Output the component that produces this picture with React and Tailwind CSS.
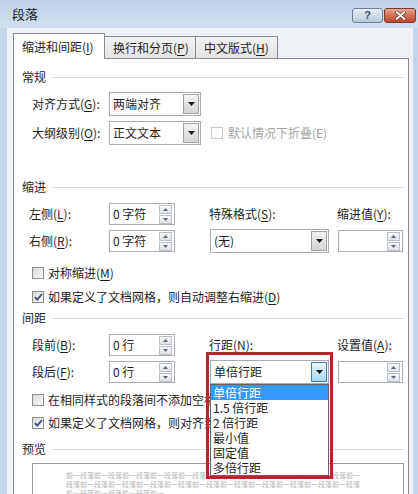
import React from "react";

function Acc({ t, k, colon = true }) {
  return (
    <span className="whitespace-nowrap">
      {t}(<span className="underline underline-offset-2">{k}</span>){colon ? ":" : ""}
    </span>
  );
}

function DownTri() {
  return (
    <svg width="7" height="4" viewBox="0 0 7 4">
      <path d="M0 0h7L3.5 4z" fill="#1a1a1a" />
    </svg>
  );
}

function Combo({ value, className, hot }) {
  return (
    <div className={`h-[24px] border border-[#a5acb5] bg-white flex items-stretch ${className}`}>
      <span className="flex-1 pl-[3px] flex items-center whitespace-nowrap">{value}</span>
      <div
        className={`w-[16px] m-px border flex items-center justify-center bg-gradient-to-b ${
          hot ? "border-[#3c7fb1] from-[#eaf6fd] to-[#a7d9f5]" : "border-[#a3a3a3] from-[#f3f3f3] to-[#d3d3d3]"
        }`}
      >
        <DownTri />
      </div>
    </div>
  );
}

function SpinBtn({ up }) {
  return (
    <div className="w-[13px] h-[9px] border border-[#b9c0ca] bg-gradient-to-b from-[#f8f8f8] to-[#e1e3e6] flex items-center justify-center">
      <svg width="5" height="3" viewBox="0 0 5 3">
        <path d={up ? "M0 3h5L2.5 0z" : "M0 0h5L2.5 3z"} fill="#56667f" />
      </svg>
    </div>
  );
}

function Spin({ value, className }) {
  return (
    <div className={`h-[22px] border border-[#abadb3] bg-white flex items-center ${className}`}>
      <span className="flex-1 pl-[3px] whitespace-nowrap">{value}</span>
      <div className="flex flex-col gap-px mr-[2px]">
        <SpinBtn up />
        <SpinBtn />
      </div>
    </div>
  );
}

function Check({ checked, disabled }) {
  return (
    <div
      className={`w-[12px] h-[12px] shrink-0 border flex items-center justify-center ${
        disabled ? "border-[#cacaca] bg-white" : "border-[#8e8f8f] bg-gradient-to-br from-[#d8d8d8] to-[#fafafa]"
      }`}
    >
      {checked && (
        <svg width="9" height="8" viewBox="0 0 9 8">
          <path d="M1 4.2l2.3 2.4L8 1" fill="none" stroke="#3a4b86" strokeWidth="1.8" />
        </svg>
      )}
    </div>
  );
}

function CheckRow({ checked, children, className }) {
  return (
    <div className={`h-[18px] ml-[10px] flex items-center gap-[4px] whitespace-nowrap ${className}`}>
      <Check checked={checked} />
      <span>{children}</span>
    </div>
  );
}

function Header({ title, className }) {
  return (
    <div className={`h-[18px] flex items-center ${className}`}>
      <span>{title}</span>
      <div className="flex-1 h-px bg-[#d5dfe5] ml-[5px]" />
    </div>
  );
}

const previewLines = [
  "前一段落前一段落前一段落前一段落前一段落前一段落前一段落前一段落前一段落前一段落前一",
  "段落前一段落前一段落前一段落前一段落前一段落前一段落前一段落前一段落前一段落前一段落",
  "前一段落前一段落前一段落前一",
];

export default function App() {
  return (
    <div className="w-[418px] h-[494px] overflow-hidden relative flex flex-col bg-[#c4d6ec] text-[12px] text-[#1e1e1e] font-['Microsoft_YaHei','Noto_Sans_CJK_SC',sans-serif]">
      {/* Title bar */}
      <div className="h-[28px] shrink-0 flex pl-[12px] pr-[2px] bg-gradient-to-b from-[#bcd1ea] to-[#d1e0f0]">
        <span className="self-center text-[13px] text-[#1b1b1b]">段落</span>
        <div className="ml-auto mt-[8px] flex gap-px">
          <div className="w-[31px] h-[15px] rounded-[3px] border border-[#71819b] bg-gradient-to-b from-[#e9eff6] to-[#b7c8dc] flex items-center justify-center">
            <span className="text-[11px] leading-none font-bold text-[#3e4d62] font-['Liberation_Sans',sans-serif]">?</span>
          </div>
          <div className="w-[32px] h-[15px] rounded-[3px] border border-[#7d3a2e] bg-gradient-to-b from-[#eaa796] via-[#d16f58] to-[#c0472f] flex items-center justify-center">
            <svg width="11" height="9" viewBox="0 0 11 9">
              <path d="M1.5 1l8 7M9.5 1l-8 7" stroke="#5a2418" strokeWidth="3" strokeLinecap="round" />
              <path d="M1.5 1l8 7M9.5 1l-8 7" stroke="#ffffff" strokeWidth="1.8" strokeLinecap="round" />
            </svg>
          </div>
        </div>
      </div>

      {/* Client area */}
      <div className="flex-1 ml-[7px] mr-[5px] bg-[#eef2f7] pl-[6px] pr-[4px] pt-[5px] flex flex-col">
        {/* Tabs */}
        <div className="h-[25px] shrink-0 flex items-end">
          <div className="relative z-10 w-[92px] h-[26px] -mb-px border border-b-0 border-[#898c95] bg-white flex items-center pl-[8px] whitespace-nowrap">
            <Acc t="缩进和间距" k="I" colon={false} />
          </div>
          <div className="w-[91px] h-[22px] border border-b-0 border-l-0 border-[#898c95] bg-gradient-to-b from-[#f3f3f3] to-[#e3e3e3] flex items-center pl-[8px] whitespace-nowrap">
            <Acc t="换行和分页" k="P" colon={false} />
          </div>
          <div className="w-[82px] h-[22px] border border-b-0 border-l-0 border-[#898c95] bg-gradient-to-b from-[#f3f3f3] to-[#e3e3e3] flex items-center pl-[8px] whitespace-nowrap">
            <Acc t="中文版式" k="H" colon={false} />
          </div>
        </div>

        {/* Panel */}
        <div className="flex-1 border border-[#898c95] bg-white pl-[8px] pr-[3px] pt-[9px] flex flex-col">
          <Header title="常规" />
          <div className="mt-[6px] h-[24px] flex items-center">
            <div className="w-[77px] ml-[10px]">
              <Acc t="对齐方式" k="G" />
            </div>
            <Combo value="两端对齐" className="w-[92px]" />
          </div>
          <div className="mt-[5px] h-[24px] flex items-center">
            <div className="w-[77px] ml-[10px]">
              <Acc t="大纲级别" k="O" />
            </div>
            <Combo value="正文文本" className="w-[92px]" />
            <div className="ml-[10px]">
              <Check disabled />
            </div>
            <span className="ml-[5px] text-[#a3a3a3] whitespace-nowrap">默认情况下折叠(E)</span>
          </div>

          <Header title="缩进" className="mt-[33px]" />
          <div className="mt-[7px] h-[22px] flex items-center">
            <div className="w-[80px] ml-[7px]">
              <Acc t="左侧" k="L" />
            </div>
            <Spin value="0 字符" className="w-[66px]" />
            <div className="w-[128px] ml-[34px]">
              <Acc t="特殊格式" k="S" />
            </div>
            <Acc t="缩进值" k="Y" />
          </div>
          <div className="mt-[4px] h-[24px] flex items-center">
            <div className="w-[80px] ml-[7px]">
              <Acc t="右侧" k="R" />
            </div>
            <Spin value="0 字符" className="w-[66px]" />
            <Combo value="(无)" className="w-[119px] ml-[35px]" />
            <Spin value="" className="w-[65px] ml-[9px]" />
          </div>
          <CheckRow className="mt-[11px]">
            <Acc t="对称缩进" k="M" colon={false} />
          </CheckRow>
          <CheckRow checked className="mt-[6px]">
            如果定义了文档网格，则自动调整右缩进(<span className="underline underline-offset-2">D</span>)
          </CheckRow>

          <Header title="间距" className="mt-[3px]" />
          <div className="mt-[7px] h-[22px] flex items-center">
            <div className="w-[77px] ml-[10px]">
              <Acc t="段前" k="B" />
            </div>
            <Spin value="0 行" className="w-[66px]" />
            <div className="w-[128px] ml-[34px]">
              <Acc t="行距" k="N" />
            </div>
            <Acc t="设置值" k="A" />
          </div>
          <div className="mt-[4px] h-[24px] flex items-center">
            <div className="w-[77px] ml-[10px]">
              <Acc t="段后" k="F" />
            </div>
            <Spin value="0 行" className="w-[66px]" />
            <Combo value="单倍行距" hot className="w-[119px] ml-[35px]" />
            <Spin value="" className="w-[65px] ml-[9px]" />
          </div>
          <CheckRow className="mt-[7px]">
            在相同样式的段落间不添加空格(<span className="underline underline-offset-2">C</span>)
          </CheckRow>
          <CheckRow checked className="mt-[5px]">
            如果定义了文档网格，则对齐到网格(<span className="underline underline-offset-2">W</span>)
          </CheckRow>

          <Header title="预览" className="mt-[8px]" />
          <div className="mt-[5px] ml-[10px] w-[372px] h-[60px] shrink-0 border border-[#9a9a9a] bg-white pt-[7px] pl-[33px] flex flex-col">
            {previewLines.map((l, i) => (
              <div key={i} className="text-[7px] leading-[9px] text-[#b4b4b4] whitespace-nowrap">
                {l}
              </div>
            ))}
          </div>
        </div>
      </div>

      {/* Open dropdown list */}
      <div className="absolute left-[210px] top-[384px] w-[119px] h-[92px] border border-[#646464] bg-white flex flex-col">
        {["单倍行距", "1.5 倍行距", "2 倍行距", "最小值", "固定值", "多倍行距"].map((o, i) => (
          <div
            key={o}
            className={`h-[15px] leading-[15px] pl-[2px] whitespace-nowrap ${i === 0 ? "bg-[#3399ff] text-white" : ""}`}
          >
            {o}
          </div>
        ))}
      </div>

      {/* Red annotation frame */}
      <div className="absolute left-[206px] top-[352px] w-[127px] h-[127px] border-[3px] border-[#b3282d]" />
    </div>
  );
}
